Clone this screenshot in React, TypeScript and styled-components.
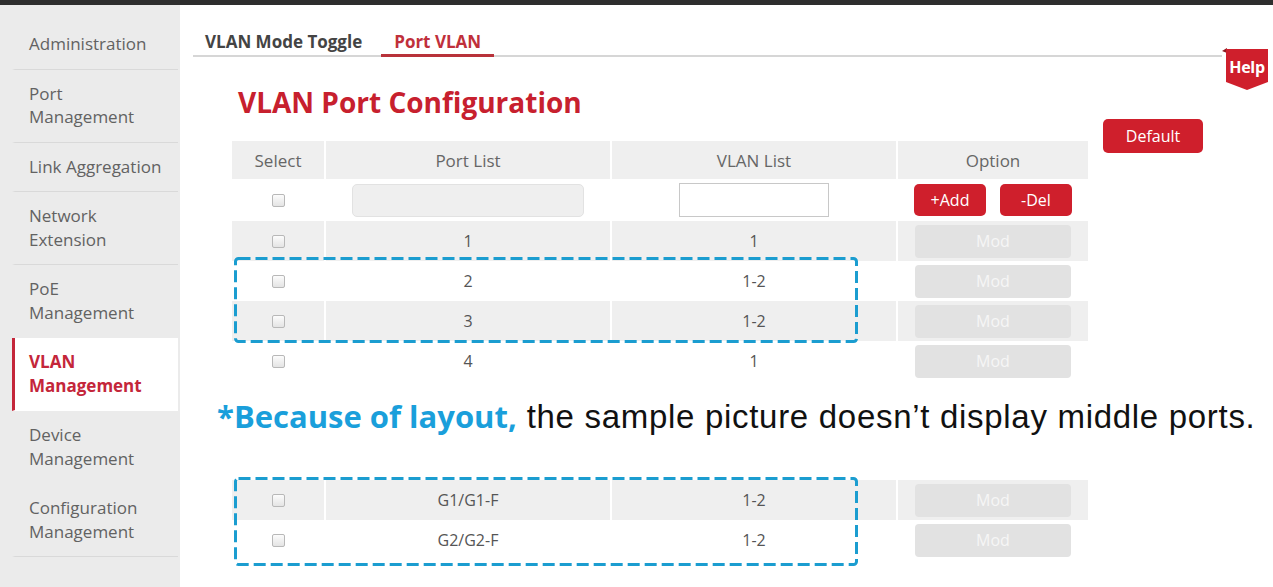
import React from "react";
import styled, { createGlobalStyle } from "styled-components";

const GlobalStyle = createGlobalStyle`
  html, body {
    margin: 0;
    padding: 0;
    background: #fff;
  }
  body {
    font-family: "Open Sans", "Noto Sans", sans-serif;
    color: #555;
  }
`;

const RED = "#cf1f2c";
const MARK = "#1b9dd0";

const TopBar = styled.div`
  height: 5px;
  background: #2e2e2e;
`;

const Page = styled.div`
  display: flex;
  min-height: calc(100vh - 5px);
`;

const Sidebar = styled.nav`
  width: 180px;
  flex-shrink: 0;
  background: #ebebeb;
  padding-top: 15px;
  box-sizing: border-box;
`;

const NavItem = styled.div<{ $active?: boolean; $divider?: boolean }>`
  margin: 0 2px 0 12px;
  padding: 12px 0 13px 14px;
  line-height: 23.5px;
  font-size: 17px;
  color: ${({ $active }) => ($active ? "#c4263a" : "#626262")};
  font-weight: ${({ $active }) => ($active ? 700 : 400)};
  background: ${({ $active }) => ($active ? "#fff" : "transparent")};
  border-left: 3px solid ${({ $active }) => ($active ? "#c4263a" : "transparent")};
  border-bottom: 1px solid ${({ $divider }) => ($divider ? "#d9d9d9" : "transparent")};
`;

const Main = styled.main`
  position: relative;
  flex: 1;
  padding: 0 51px 0 13px;
`;

const TabBar = styled.div`
  display: flex;
  align-items: flex-end;
  height: 50px;
  border-bottom: 2px solid #d6d6d6;
`;

const Tab = styled.div<{ $active?: boolean }>`
  padding: 0 13px;
  margin-right: 6px;
  margin-bottom: -2px;
  line-height: 24px;
  font-size: 17px;
  font-weight: 700;
  color: ${({ $active }) => ($active ? "#c0303b" : "#444")};
  border-bottom: 3px solid ${({ $active }) => ($active ? "#b8323a" : "transparent")};
  &:first-child {
    padding-left: 12px;
  }
`;

const HelpTag = styled.div`
  position: absolute;
  top: 43px;
  right: 5px;
  width: 46px;
  height: 42px;
`;

const Content = styled.div`
  display: flex;
  padding-left: 39px;
`;

const Panel = styled.div`
  width: 856px;
  padding-top: 28px;
`;

const Aside = styled.div`
  padding: 62px 0 0 15px;
`;

const Title = styled.h1`
  margin: 0 0 22px 6px;
  font-size: 28px;
  line-height: 34px;
  font-weight: 700;
  color: #c7202e;
`;

const RedButton = styled.button<{ $w: number; $h: number }>`
  width: ${({ $w }) => $w}px;
  height: ${({ $h }) => $h}px;
  border: none;
  border-radius: 5px;
  background: ${RED};
  color: #fff;
  font-family: inherit;
  font-size: 16px;
  padding: 0;
  cursor: pointer;
`;

const ModButton = styled.button`
  width: 156px;
  height: 33px;
  border: none;
  border-radius: 4px;
  background: #e2e2e2;
  color: #f6f6f6;
  font-family: inherit;
  font-size: 16px;
  padding: 0;
`;

const Row = styled.div<{ $shaded?: boolean; $h?: number }>`
  display: grid;
  grid-template-columns: 92px 284px 284px 190px;
  column-gap: 2px;
  height: ${({ $h }) => $h ?? 40}px;
  & > div {
    background: ${({ $shaded }) => ($shaded ? "#efefef" : "transparent")};
  }
`;

const Cell = styled.div<{ $head?: boolean }>`
  display: flex;
  align-items: center;
  justify-content: center;
  gap: 14px;
  font-size: ${({ $head }) => ($head ? 17 : 16)}px;
  color: ${({ $head }) => ($head ? "#666" : "#555")};
`;

const Check = styled.input.attrs({ type: "checkbox" })`
  appearance: none;
  width: 13px;
  height: 13px;
  margin: 0;
  border: 1px solid #b8b8b8;
  border-radius: 2px;
  background: linear-gradient(#fcfcfc, #e4e4e4);
`;

const PortInput = styled.input`
  width: 232px;
  height: 33px;
  box-sizing: border-box;
  border: 1px solid #e2e2e2;
  border-radius: 5px;
  background: #efefef;
`;

const VlanInput = styled.input`
  width: 150px;
  height: 34px;
  box-sizing: border-box;
  border: 1px solid #c8c8c8;
  background: #fff;
`;

const Group = styled.div`
  position: relative;
`;

const Frame = styled.svg<{ $top: number }>`
  position: absolute;
  left: 2px;
  top: ${({ $top }) => $top}px;
  pointer-events: none;
`;

const Note = styled.p`
  margin: 17px 0 45px -15px;
  line-height: 36px;
  white-space: nowrap;
  font-family: "Liberation Sans", Arial, sans-serif;
  font-size: 33px;
  letter-spacing: 0.7px;
  color: #111;
`;

const NoteLead = styled.span`
  font-family: "Open Sans", sans-serif;
  font-size: 31px;
  letter-spacing: 0;
  font-weight: 700;
  color: #1a9fdb;
`;

const DashedFrame = ({ height, top }: { height: number; top: number }) => (
  <Frame $top={top} width={624} height={height}>
    <rect
      x={1.5}
      y={1.5}
      width={621}
      height={height - 3}
      rx={3}
      fill="none"
      stroke={MARK}
      strokeWidth={3}
      strokeDasharray="12 5"
    />
  </Frame>
);

interface IPort {
  port: string;
  vlan: string;
}

const PortRow = ({ port, vlan, shaded }: IPort & { shaded?: boolean }) => (
  <Row $shaded={shaded}>
    <Cell>
      <Check />
    </Cell>
    <Cell>{port}</Cell>
    <Cell>{vlan}</Cell>
    <Cell>
      <ModButton>Mod</ModButton>
    </Cell>
  </Row>
);

const menu = [
  { label: ["Administration"], divider: true },
  { label: ["Port", "Management"], divider: true },
  { label: ["Link Aggregation"], divider: true },
  { label: ["Network", "Extension"], divider: true },
  { label: ["PoE", "Management"] },
  { label: ["VLAN", "Management"], active: true },
  { label: ["Device", "Management"] },
  { label: ["Configuration", "Management"], divider: true },
];

const App = () => {
  return (
    <>
      <GlobalStyle />
      <TopBar />
      <Page>
        <Sidebar>
          {menu.map((item) => (
            <NavItem key={item.label.join(" ")} $active={item.active} $divider={item.divider}>
              {item.label.map((line) => (
                <div key={line}>{line}</div>
              ))}
            </NavItem>
          ))}
        </Sidebar>
        <Main>
          <TabBar>
            <Tab>VLAN Mode Toggle</Tab>
            <Tab $active>Port VLAN</Tab>
          </TabBar>
          <HelpTag>
            <svg width={46} height={42} viewBox="0 0 46 42">
              <path d="M0 3 L5 0 L5 5 Z" fill="#8e1a22" />
              <path d="M4 1 H46 V34 L25 42 L4 34 Z" fill={RED} />
              <text
                x={25}
                y={25}
                textAnchor="middle"
                fill="#fff"
                fontSize={16}
                fontWeight={700}
                letterSpacing={-0.3}
                fontFamily="Open Sans, sans-serif"
              >
                Help
              </text>
            </svg>
          </HelpTag>
          <Content>
            <Panel>
              <Title>VLAN Port Configuration</Title>
              <Row $shaded $h={38}>
                <Cell $head>Select</Cell>
                <Cell $head>Port List</Cell>
                <Cell $head>VLAN List</Cell>
                <Cell $head>Option</Cell>
              </Row>
              <Row $h={42}>
                <Cell>
                  <Check />
                </Cell>
                <Cell>
                  <PortInput disabled />
                </Cell>
                <Cell>
                  <VlanInput />
                </Cell>
                <Cell>
                  <RedButton $w={72} $h={32}>+Add</RedButton>
                  <RedButton $w={72} $h={32}>-Del</RedButton>
                </Cell>
              </Row>
              <PortRow port="1" vlan="1" shaded />
              <Group>
                <PortRow port="2" vlan="1-2" />
                <PortRow port="3" vlan="1-2" shaded />
                <DashedFrame top={-4} height={86} />
              </Group>
              <PortRow port="4" vlan="1" />
              <Note>
                <NoteLead>*Because of layout,</NoteLead> the sample picture doesn’t display middle
                ports.
              </Note>
              <Group>
                <PortRow port="G1/G1-F" vlan="1-2" shaded />
                <PortRow port="G2/G2-F" vlan="1-2" />
                <DashedFrame top={-3} height={89} />
              </Group>
            </Panel>
            <Aside>
              <RedButton $w={100} $h={34}>Default</RedButton>
            </Aside>
          </Content>
        </Main>
      </Page>
    </>
  );
};

export default App;
